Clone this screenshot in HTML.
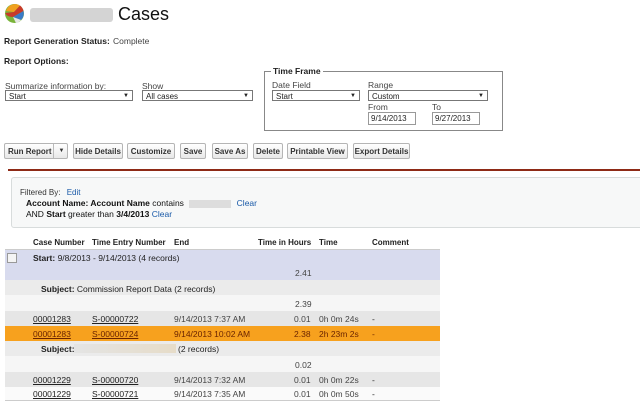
<!DOCTYPE html>
<html><head><style>
body{margin:0;width:640px;height:400px;overflow:hidden;background:#fff;font-family:"Liberation Sans",Arial,sans-serif;font-size:8.5px;color:#222;position:relative}
.a{position:absolute;white-space:nowrap}
.b{font-weight:bold}
.sel{position:absolute;height:11px;border:1px solid #777;background:#fff;font-size:8px;line-height:11px;padding-left:3px;box-sizing:border-box}
.sel:after{content:"▼";position:absolute;right:3px;top:0;font-size:6px}
.inp{position:absolute;height:13px;border:1px solid #999;background:#fff;font-size:8px;line-height:12px;padding-left:2px;box-sizing:border-box}
.btn{position:absolute;top:143px;height:16px;border:1px solid #b5b5b5;border-radius:2px;background:linear-gradient(#fff,#e8e8e8);font-size:8px;font-weight:bold;color:#333;line-height:15px;text-align:center;box-sizing:border-box}
.row{position:absolute;left:5px;width:435px}
.u{text-decoration:underline}
.lnk{color:#1a5aa8}
</style></head><body>
<svg class="a" style="left:4px;top:3px" width="21" height="21" viewBox="0 0 21 21">
<circle cx="10.5" cy="10.5" r="9.5" fill="#7ab33a"/>
<path d="M2 8 A9.5 9.5 0 0 1 16 2.5 L10 9Z" fill="#f0a020"/>
<path d="M1.2 10 L10 9 L16 2.5 A9.5 9.5 0 0 1 19.5 8 L9 14 Q3 14 1.2 10Z" fill="#c83a2a"/>
<path d="M9 14 L19.5 8 A9.5 9.5 0 0 1 17 17 Z" fill="#3a7ac8"/>
<path d="M9 14 L17 17 A9.5 9.5 0 0 1 12 20 Z" fill="#e6e6e6"/>
</svg>
<div class="a" style="left:30px;top:8px;width:83px;height:14px;background:#d4d4d4;border-radius:3px"></div>
<div class="a" style="left:118px;top:4px;font-size:18px;color:#111">Cases</div>
<div class="a b" style="left:4px;top:36px">Report Generation Status:</div>
<div class="a" style="left:113px;top:36px;color:#444">Complete</div>
<div class="a b" style="left:4px;top:56px">Report Options:</div>
<div class="a" style="left:5px;top:81px;color:#444">Summarize information by:</div>
<div class="sel" style="left:5px;top:90px;width:128px">Start</div>
<div class="a" style="left:142px;top:81px;color:#444">Show</div>
<div class="sel" style="left:142px;top:90px;width:111px">All cases</div>
<div class="a" style="left:264px;top:71px;width:239px;height:60px;border:1px solid #888;box-sizing:border-box"></div>
<div class="a b" style="left:271px;top:66px;background:#fff;padding:0 2px">Time Frame</div>
<div class="a" style="left:272px;top:80px;color:#444">Date Field</div>
<div class="sel" style="left:272px;top:90px;width:88px">Start</div>
<div class="a" style="left:368px;top:80px;color:#444">Range</div>
<div class="sel" style="left:368px;top:90px;width:120px">Custom</div>
<div class="a" style="left:368px;top:102px;color:#444">From</div>
<div class="inp" style="left:368px;top:112px;width:48px">9/14/2013</div>
<div class="a" style="left:432px;top:102px;color:#444">To</div>
<div class="inp" style="left:432px;top:112px;width:48px">9/27/2013</div>
<div class="btn" style="left:4px;width:64px;text-align:left;padding-left:3px">Run Report<span style="position:absolute;left:48px;top:0;height:14px;border-left:1px solid #bbb;width:15px;text-align:center;font-size:6px">▼</span></div>
<div class="btn" style="left:73px;width:50px">Hide Details</div>
<div class="btn" style="left:127px;width:48px">Customize</div>
<div class="btn" style="left:180px;width:26px">Save</div>
<div class="btn" style="left:212px;width:36px">Save As</div>
<div class="btn" style="left:253px;width:30px">Delete</div>
<div class="btn" style="left:287px;width:61px">Printable View</div>
<div class="btn" style="left:353px;width:57px">Export Details</div>
<div class="a" style="left:8px;top:169px;width:632px;height:2px;background:#8e2a16"></div>
<div class="a" style="left:11px;top:177px;width:640px;height:51px;background:#f7f8f8;border:1px solid #d8dcdc;border-radius:3px;box-sizing:border-box"></div>
<div class="a" style="left:20px;top:188px;font-size:8px;color:#333">Filtered By: <span class="lnk" style="margin-left:4px">Edit</span></div>
<div class="a" style="left:26px;top:198px;color:#111"><b>Account Name: Account Name</b> contains <span style="display:inline-block;width:42px;height:8px;background:#ddd;vertical-align:middle;margin:0 3px"></span> <span class="lnk">Clear</span></div>
<div class="a" style="left:26px;top:209px;color:#111">AND <b>Start</b> greater than <b>3/4/2013</b> <span class="lnk">Clear</span></div>
<div class="row b" style="top:236px;height:13px;line-height:13px;border-bottom:1px solid #ccc;font-size:8px">
<span class="a" style="left:28px">Case Number</span><span class="a" style="left:87px">Time Entry Number</span><span class="a" style="left:169px">End</span><span class="a" style="left:253px">Time in Hours</span><span class="a" style="left:314px">Time</span><span class="a" style="left:367px">Comment</span></div>
<div class="row" style="top:250px;height:30px;background:#d8dbee"></div>
<div class="a" style="left:7px;top:253px;width:8px;height:8px;border:1px solid #999;background:#f4f4f4"></div>
<div class="a" style="left:33px;top:253px"><b>Start:</b> 9/8/2013 - 9/14/2013 (4 records)</div>
<div class="a" style="left:295px;top:268px;color:#444">2.41</div>
<div class="row" style="top:280px;height:15px;background:#ebebeb"></div>
<div class="a" style="left:41px;top:284px"><b>Subject:</b> Commission Report Data (2 records)</div>
<div class="row" style="top:295px;height:16px;background:#f6f6f6"></div>
<div class="a" style="left:295px;top:299px;color:#444">2.39</div>
<div class="row" style="top:311px;height:15px;background:#e6e6e6"></div>
<div class="a" style="top:314px;left:33px"><span class="u">00001283</span><span class="u a" style="left:59px">S-00000722</span><span class="a" style="left:141px;color:#444">9/14/2013 7:37 AM</span><span class="a" style="left:261px;color:#444">0.01</span><span class="a" style="left:286px;color:#444">0h 0m 24s</span><span class="a" style="left:339px">-</span></div>
<div class="row" style="top:326px;height:15px;background:#f7a11e"></div>
<div class="a" style="top:329px;left:33px;color:#6a2400"><span class="u">00001283</span><span class="u a" style="left:59px">S-00000724</span><span class="a" style="left:141px">9/14/2013 10:02 AM</span><span class="a" style="left:261px">2.38</span><span class="a" style="left:286px">2h 23m 2s</span><span class="a" style="left:339px">-</span></div>
<div class="row" style="top:341px;height:15px;background:#ebebeb"></div>
<div class="a" style="left:41px;top:344px"><b>Subject:</b></div>
<div class="a" style="left:74px;top:344px;width:102px;height:9px;background:linear-gradient(90deg,#e4e4e4,#e6dcc8)"></div>
<div class="a" style="left:178px;top:344px">(2 records)</div>
<div class="row" style="top:356px;height:16px;background:#f6f6f6"></div>
<div class="a" style="left:295px;top:360px;color:#444">0.02</div>
<div class="row" style="top:372px;height:15px;background:#e6e6e6"></div>
<div class="a" style="top:375px;left:33px"><span class="u">00001229</span><span class="u a" style="left:59px">S-00000720</span><span class="a" style="left:141px;color:#444">9/14/2013 7:32 AM</span><span class="a" style="left:261px;color:#444">0.01</span><span class="a" style="left:286px;color:#444">0h 0m 22s</span><span class="a" style="left:339px">-</span></div>
<div class="row" style="top:387px;height:13px;background:#fafafa;border-bottom:1px solid #ccc"></div>
<div class="a" style="top:389px;left:33px"><span class="u">00001229</span><span class="u a" style="left:59px">S-00000721</span><span class="a" style="left:141px;color:#444">9/14/2013 7:35 AM</span><span class="a" style="left:261px;color:#444">0.01</span><span class="a" style="left:286px;color:#444">0h 0m 50s</span><span class="a" style="left:339px">-</span></div>
</body></html>
